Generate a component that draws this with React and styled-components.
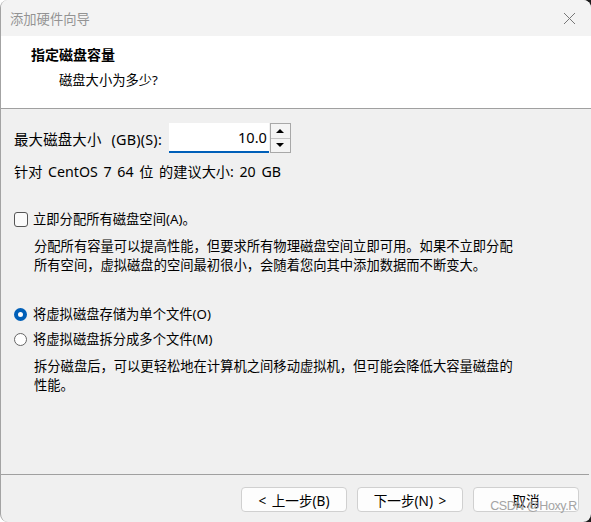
import React from 'react';
import styled, { createGlobalStyle } from 'styled-components';

const GlobalStyle = createGlobalStyle`
    html, body {
        margin: 0;
        padding: 0;
        background: #fff;
    }
    body {
        font-family: "Noto Sans", "Noto Sans CJK SC", sans-serif;
        font-size: 13.3px;
        color: #000;
    }
`
// backdrop behind the window corners (white on the left, dark desktop on the right)
const Desk = styled.div`
    width: 591px;
    height: 522px;
    background: linear-gradient(to right, #fff 50%, #1c1c1c 50%);
`
const Window = styled.div`
    display: flex;
    flex-direction: column;
    height: 100%;
    box-sizing: border-box;
    background: #f0f0f0;
    border-left: 1px solid #a3a3a3;
    border-radius: 8px;
    overflow: hidden;
    position: relative;
`
const TitleBar = styled.div`
    flex: 0 0 36px;
    box-sizing: border-box;
    display: flex;
    align-items: center;
    justify-content: space-between;
    padding: 0 15px 0 9px;
    background: #f3f3f3;
    color: #939393;
    font-size: 13.3px;
`
const CloseButton = styled.button`
    border: none;
    background: none;
    padding: 0;
    width: 13px;
    height: 13px;
    display: flex;
    svg {
        display: block;
    }
`
const Header = styled.div`
    flex: 0 0 73px;
    box-sizing: border-box;
    background: #fff;
    border-bottom: 1px solid #a0a0a0;
    padding: 9px 0 0 30px;
`
const HeaderTitle = styled.div`
    font-weight: bold;
    font-size: 14px;
    line-height: 20px;
`
const HeaderSub = styled.div`
    margin: 5px 0 0 28px;
    line-height: 20px;
`
const Body = styled.div`
    flex: 1 1 auto;
    padding: 14px 0 0 13px;
`
const SizeRow = styled.div`
    display: flex;
    align-items: center;
    gap: 7px;
    height: 30px;
`
const Label = styled.span`
    font-size: 14.4px;
    word-spacing: 6px;
    letter-spacing: 0.2px;
`
const SpinBox = styled.div`
    display: flex;
    height: 30px;
`
const NumberField = styled.div`
    width: 100px;
    height: 30px;
    box-sizing: border-box;
    background: #fff;
    border-bottom: 2px solid #005fb8;
    display: flex;
    align-items: center;
    justify-content: flex-end;
    padding-right: 2px;
    font-size: 14.6px;
`
const Arrows = styled.div`
    width: 21px;
    margin-left: 1px;
    box-sizing: border-box;
    border: 1px solid #a8a8a8;
    display: flex;
    flex-direction: column;
    background: #f4f4f4;
`
const Arrow = styled.div`
    flex: 1;
    display: flex;
    align-items: center;
    justify-content: center;
    border-top: ${p => (p.$down ? '1px solid #c4c4c4' : 'none')};
    &::after {
        content: '';
        border-left: 4px solid transparent;
        border-right: 4px solid transparent;
        ${p => (p.$down ? 'border-top: 4px solid #000;' : 'border-bottom: 4px solid #000;')}
    }
`
const Hint = styled.div`
    margin-top: 9px;
    line-height: 20px;
    font-size: 14.2px;
    word-spacing: 2px;
`
const OptionRow = styled.label`
    display: flex;
    align-items: center;
    gap: 5px;
    line-height: 20px;
    margin-top: ${p => p.$top || 0}px;
`
const CheckBox = styled.span`
    width: 12px;
    height: 13px;
    border: 1px solid #555;
    border-radius: 3px;
    background: #fafafa;
`
const Radio = styled.span`
    width: 13px;
    height: 13px;
    border-radius: 50%;
    box-sizing: border-box;
    border: ${p => (p.$checked ? '4px solid #005fb8' : '1px solid #666')};
    background: #fff;
    margin: 0 1px 0 0;
`
const Desc = styled.div`
    margin: 8px 0 0 20px;
    width: 480px;
    line-height: 19px;
`
const Footer = styled.div`
    flex: 0 0 48px;
    box-sizing: border-box;
    border-top: 1px solid #a0a0a0;
    margin-right: 2px;
    display: flex;
    justify-content: flex-end;
    align-items: flex-start;
    gap: 10px;
    padding: 12px 10px 0 0;
`
const Button = styled.button`
    width: 106px;
    height: 25px;
    border: 1px solid #d0d0d0;
    border-radius: 4px;
    background: #fdfdfd;
    font-family: inherit;
    font-size: 13.6px;
    word-spacing: 2px;
    color: #000;
    padding: 0;
`
// screenshot watermark lying over the cancel button
const Watermark = styled.div`
    position: absolute;
    right: 14px;
    bottom: 9px;
    color: #a4a4a4;
    font-size: 12.5px;
    font-family: "Liberation Sans", Arial, sans-serif;
    letter-spacing: -0.4px;
`

const App = () => (
    <Desk>
        <GlobalStyle />
        <Window>
            <TitleBar>
                <span>添加硬件向导</span>
                <CloseButton aria-label="close">
                    <svg width="13" height="13" viewBox="0 0 13 13">
                        <path d="M1 1 L12 12 M12 1 L1 12" stroke="#777" strokeWidth="1" fill="none" />
                    </svg>
                </CloseButton>
            </TitleBar>
            <Header>
                <HeaderTitle>指定磁盘容量</HeaderTitle>
                <HeaderSub>磁盘大小为多少?</HeaderSub>
            </Header>
            <Body>
                <SizeRow>
                    <Label>最大磁盘大小 (GB)(S):</Label>
                    <SpinBox>
                        <NumberField>10.0</NumberField>
                        <Arrows>
                            <Arrow />
                            <Arrow $down />
                        </Arrows>
                    </SpinBox>
                </SizeRow>
                <Hint>针对 CentOS 7 64 位 的建议大小: 20 GB</Hint>

                <OptionRow $top={27}>
                    <CheckBox />
                    <span>立即分配所有磁盘空间(A)。</span>
                </OptionRow>
                <Desc>
                    分配所有容量可以提高性能，但要求所有物理磁盘空间立即可用。如果不立即分配所有空间，虚拟磁盘的空间最初很小，会随着您向其中添加数据而不断变大。
                </Desc>

                <OptionRow $top={29}>
                    <Radio $checked />
                    <span>将虚拟磁盘存储为单个文件(O)</span>
                </OptionRow>
                <OptionRow $top={5}>
                    <Radio />
                    <span>将虚拟磁盘拆分成多个文件(M)</span>
                </OptionRow>
                <Desc>
                    拆分磁盘后，可以更轻松地在计算机之间移动虚拟机，但可能会降低大容量磁盘的性能。
                </Desc>
            </Body>
            <Footer>
                <Button>&lt; 上一步(B)</Button>
                <Button>下一步(N) &gt;</Button>
                <Button>取消</Button>
            </Footer>
            <Watermark>CSDN @Hoxy.R</Watermark>
        </Window>
    </Desk>
);

export default App;
